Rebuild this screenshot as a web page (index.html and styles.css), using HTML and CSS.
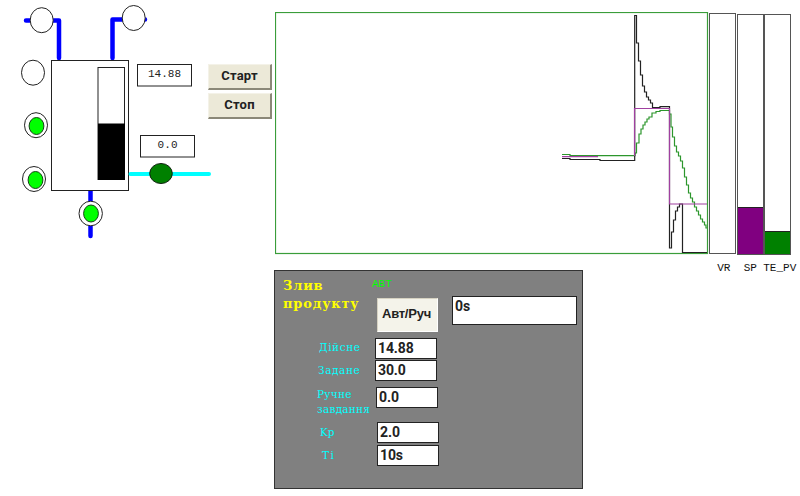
FILE: index.html
```html
<!DOCTYPE html>
<html lang="uk">
<head>
<meta charset="utf-8">
<title>Злив продукту</title>
<link rel="stylesheet" href="styles.css">
</head>
<body>
<main class="screen">
  <svg class="process" width="208" height="260" viewBox="0 0 208 260">
    <g class="pipe">
      <path d="M26 20.5H59V58"/>
      <path d="M112.500 58V19.500H145"/>
      <path d="M90.500 191V236"/>
    </g>
    <rect class="outline" x="51.500" y="60.500" width="77" height="130"/>
    <rect class="outline" x="98" y="67.500" width="26.500" height="112"/>
    <rect x="98" y="123.500" width="27" height="56.500"/>
    <path class="water" d="M130.500 174H209"/>
    <g class="outline">
      <ellipse cx="41.700" cy="20.200" rx="11.500" ry="12.500"/>
      <ellipse cx="133.700" cy="18" rx="11.500" ry="12.500"/>
      <ellipse cx="33" cy="72.700" rx="11.500" ry="12.500"/>
      <ellipse cx="36" cy="125.200" rx="11.500" ry="12.500"/>
      <ellipse cx="34" cy="179" rx="11.500" ry="12.500"/>
      <ellipse cx="90.700" cy="213.500" rx="11.700" ry="12.300"/>
    </g>
    <g class="lamp">
      <ellipse cx="36.500" cy="126" rx="7.400" ry="8.500"/>
      <ellipse cx="35.500" cy="180" rx="7.400" ry="8.500"/>
      <ellipse cx="91" cy="213.500" rx="7.400" ry="8.500"/>
    </g>
    <ellipse class="valve" cx="161" cy="173.500" rx="11.300" ry="10"/>
    <rect class="outline" x="137.500" y="64.500" width="54" height="21.500"/>
    <rect class="outline" x="140.500" y="135.500" width="54" height="21.500"/>
    <text class="reading" x="148" y="77" textLength="33">14.88</text>
    <text class="reading" x="157.500" y="148" textLength="20">0.0</text>
  </svg>

  <div class="commands">
    <button class="command">Старт</button>
    <button class="command">Стоп</button>
  </div>

  <div class="work">
    <div class="charts">
      <svg class="trend" width="434" height="243" viewBox="275 12 434 243">
        <rect class="frame" x="275.500" y="12.500" width="432" height="241"/>
        <path class="pv" d="M562 154.500H570V155.700H635V153H636.500V143H639V134H641V129H643V125H645V122H647V119H649V117H652V113H656V111.500H660V110.500H669.500V114H671V127H672.500V137H674.500V146H676.500V152H678.500V156H680.500V161H682.500V168H684.500V177H686.500V185H688.500V193H690.500V198H692.500V202H694.500V207H696.500V211H698.500V215H700.500V219H702.500V222H704.500V225H706V228H707"/>
        <path class="out" d="M562 158.500H570V159.500H600V160.500H634.700V15.500H636.500V43H638.500V61H640.500V75H642.500V86H644.500V92H646.500V97H648.500V100H650.500V103H652.500V107.500H660V106.700H669.500V248H671.500V232H673.500V220H675.500V211H677.500V207H679.500V204H682.500V252.500H707"/>
        <path class="sp" d="M562 156.700H598M634.500 156V108.500H669.500V204H707"/>
      </svg>
      <div class="level level-vr"><div class="tube"></div><span>VR</span></div>
      <div class="level level-sp"><div class="tube"><div class="fill"></div></div><span>SP</span></div>
      <div class="level level-te"><div class="tube"><div class="fill"></div></div><span>TE_PV</span></div>
    </div>

    <section class="panel">
      <div class="head">
        <h1>Злив продукту</h1>
        <div class="mode"><span>АВТ</span><button class="toggle">Авт/Руч</button></div>
        <div class="field timer">0s</div>
      </div>
      <div class="row r1"><label>Дійсне</label><div class="field">14.88</div></div>
      <div class="row r2"><label>Задане</label><div class="field">30.0</div></div>
      <div class="row r3"><label>Ручне завдання</label><div class="field">0.0</div></div>
      <div class="row r4"><label>Kp</label><div class="field">2.0</div></div>
      <div class="row r5"><label>Ti</label><div class="field">10s</div></div>
    </section>
  </div>
</main>
</body>
</html>
```
FILE: styles.css
```css
* { box-sizing: border-box; }
body { margin: 0; background: #fff; }
.screen { display: flex; width: 800px; height: 496px; overflow: hidden; }

.process { flex: none; overflow: visible; }
.outline { fill: #fff; stroke: #222; stroke-width: 1; }
.pipe { fill: none; stroke: #00f; stroke-width: 4.5; stroke-linecap: round; stroke-linejoin: round; }
.water { stroke: #0ff; stroke-width: 4; stroke-linecap: round; }
.lamp { fill: #0f0; stroke: #164016; }
.valve { fill: #008000; stroke: #102010; }
.reading { font: 11px "Liberation Mono", monospace; fill: #222; }

.commands { flex: none; width: 66px; padding-top: 64px; display: flex; flex-direction: column; gap: 3px; }
.command {
  width: 64px; height: 26px; padding: 0 0 2px;
  background: #ece9d8; border: 1px solid #f4f2e8;
  border-right: 2px solid #8b8878; border-bottom: 2px solid #8b8878;
  font: bold 13px Roboto, sans-serif; letter-spacing: .2px; color: #222;
}

.work { flex: none; width: 526px; padding-top: 12px; }
.charts { display: flex; height: 258px; padding-left: 1px; }
.trend { flex: none; }
.trend path, .frame { fill: none; stroke-width: 1.2; }
.trend .frame { stroke: #3a9d3a; }
.trend .pv { stroke: #2c962c; }
.trend .out { stroke: #222; }
.trend .sp { stroke: #a040a0; }

.level { flex: none; width: 27.500px; display: flex; flex-direction: column; align-items: center; }
.level span { font: 11px/14px "Liberation Mono", monospace; color: #111; margin-top: 6px; white-space: nowrap; }
.level-vr { padding-top: 1px; }
.level-vr span { margin: 7px 0 0 2px; }
.level-sp, .level-te { padding-top: 2px; }
.level-te span { margin-right: -4px; }
.tube { flex: none; width: 27px; height: 241px; border: 1px solid #555; display: flex; flex-direction: column; justify-content: flex-end; }
.fill { border-top: 1px solid #222; }
.level-sp .fill { height: 47px; background: #800080; }
.level-te .fill { height: 23px; background: #008000; }

.panel { width: 309px; height: 219px; background: #808080; border: 1px solid #333; }
.head { display: flex; height: 67px; }
.head h1 { margin: 6px 0 0 8px; width: 94px; font: bold 13px/18px "DejaVu Serif", serif; letter-spacing: .8px; color: #ff0; }
.mode { width: 75px; padding-top: 6px; display: flex; flex-direction: column; }
.mode span { margin-left: -5px; font: 11px/14px "Liberation Mono", monospace; color: #0f0; }
.toggle {
  width: 61px; height: 34px; margin-top: 7px; padding: 0 2px 3px 0; white-space: nowrap;
  background: #f4f3ea; border: 1px solid #d6d2c2; border-right-color: #fff; border-bottom-color: #fff;
  font: bold 13px "Liberation Sans", sans-serif; letter-spacing: -.25px; color: #222;
}
.field {
  width: 62px; height: 21px; padding-left: 2px; background: #fff; border: 1.500px solid #222;
  font: bold 14px/19px Roboto, sans-serif; letter-spacing: -.1px; color: #222;
}
.timer { width: 125px; height: 29px; margin-top: 25px; }
.row { display: flex; align-items: center; height: 21px; }
.row label { flex: none; font: 10.500px/15px "DejaVu Serif", serif; letter-spacing: .6px; color: #0ff; }
.r1 { padding-left: 44px; }
.r1 label { width: 56px; padding-bottom: 2px; }
.r2 { padding-left: 43px; margin-top: 1px; }
.r2 label { width: 57px; }
.r3 { padding-left: 42px; height: 30px; margin-top: 6px; align-items: flex-start; }
.r3 label { width: 59px; letter-spacing: .25px; }
.r4 { padding-left: 45px; margin-top: 5px; }
.r4 label { width: 57px; letter-spacing: 0; }
.r5 { padding-left: 47px; margin-top: 2px; }
.r5 label { width: 55px; letter-spacing: 1.500px; }
```
